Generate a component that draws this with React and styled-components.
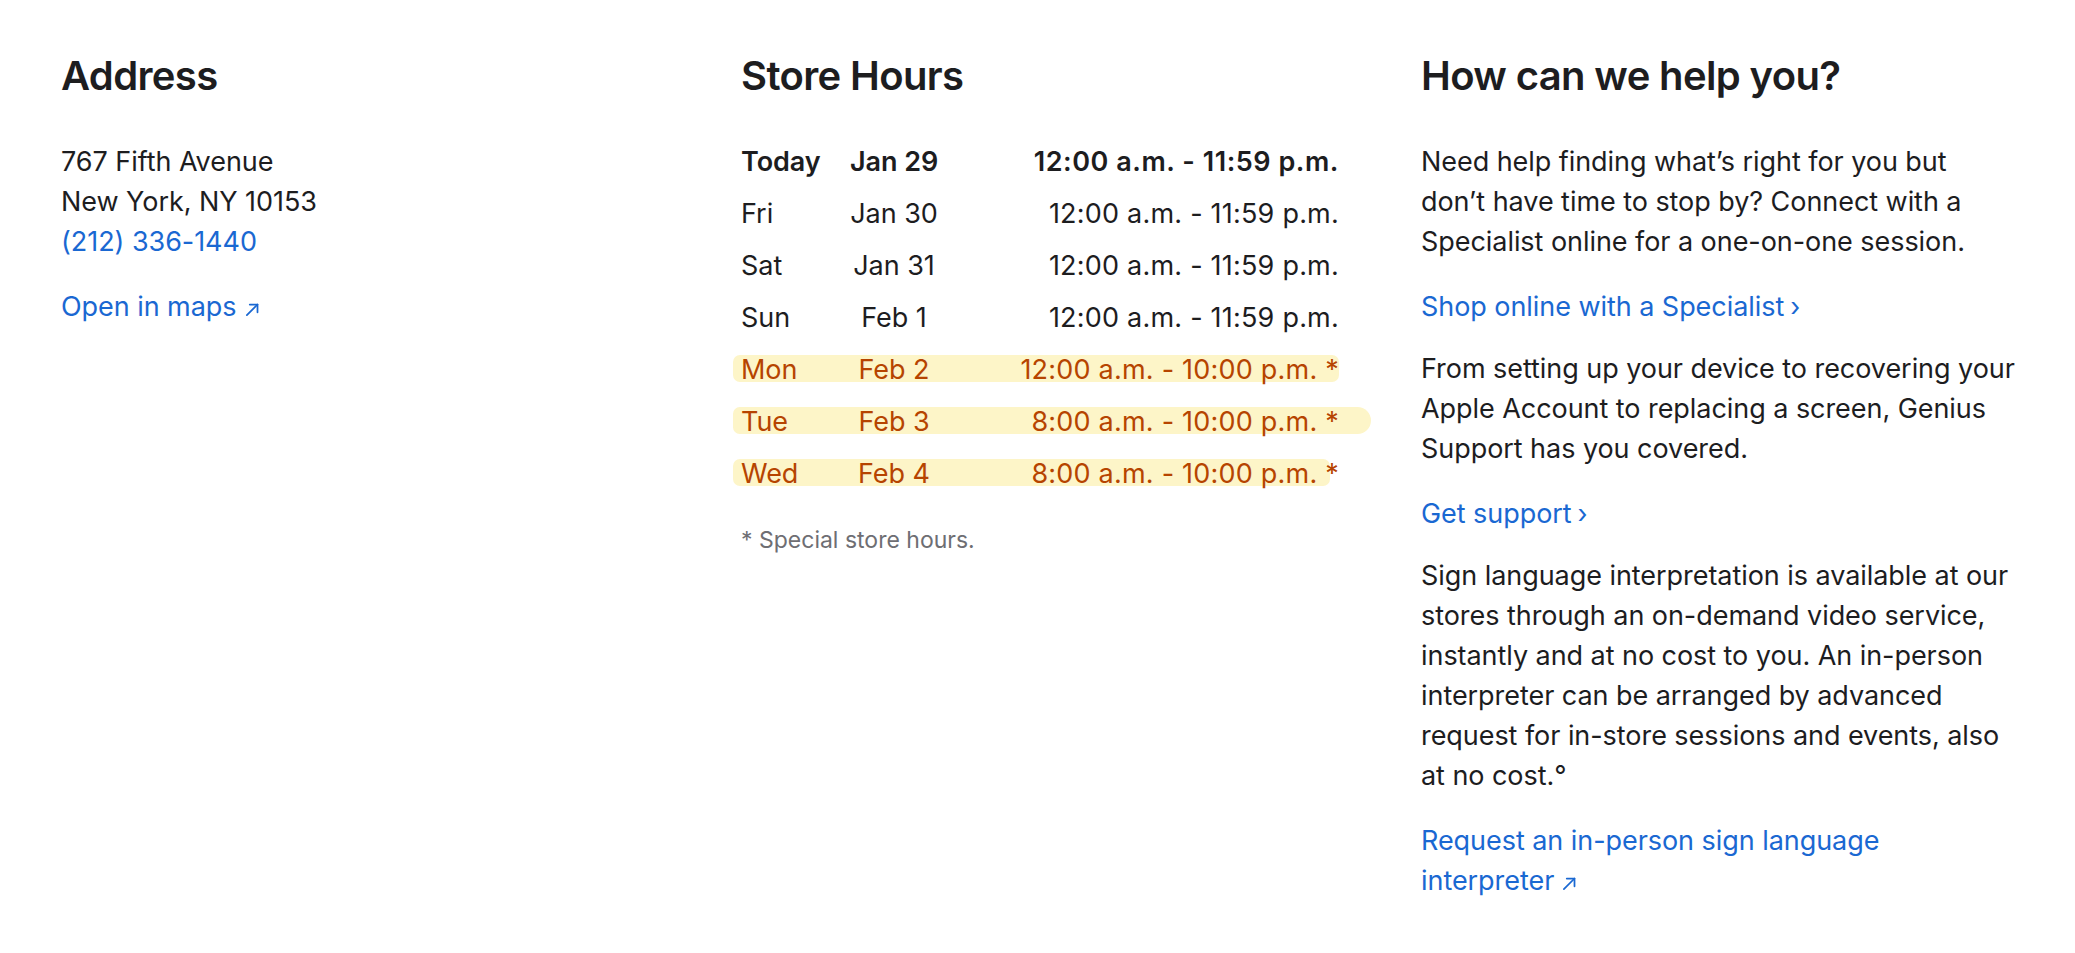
import React from "react";
import styled, { createGlobalStyle } from "styled-components";

const Global = createGlobalStyle`
  html, body { margin: 0; padding: 0; background: #fff; }
  body {
    font-family: Inter, "Noto Sans", "Liberation Sans", sans-serif;
    color: #1d1d1f;
    -webkit-font-smoothing: antialiased;
  }
`;

const Page = styled.main`
  display: grid;
  grid-template-columns: repeat(3, 1fr);
  column-gap: 84px;
  padding: 52px 58px 40px 61px;
  box-sizing: border-box;
  width: 2075px;
`;

const Section = styled.section`
  display: flex;
  flex-direction: column;
  min-width: 0;
`;

const Heading = styled.h2`
  margin: 0 0 42px;
  font-size: 40px;
  line-height: 48px;
  font-weight: 600;
  letter-spacing: -0.016em;
  color: #1d1d1f;
`;

const Para = styled.p`
  margin: ${(p) => p.$top ?? 24}px 0 0;
  font-size: 27px;
  line-height: 40px;
  letter-spacing: -0.002em;
  color: #1d1d1f;
`;

const Link = styled.a`
  color: #1a68d2;
  text-decoration: none;
`;

const NoWrap = styled.span`
  white-space: nowrap;
`;

const Chevron = styled.span`
  display: inline-block;
  margin-left: 6px;
  font-size: 26px;
`;

const Arrow = styled.svg`
  display: inline-block;
  width: 15px;
  height: 15px;
  margin-left: 8px;
  vertical-align: -1px;
`;

const Table = styled.div`
  display: flex;
  flex-direction: column;
  margin-top: -6px;
`;

const Row = styled.div`
  position: relative;
  isolation: isolate;
  display: grid;
  grid-template-columns: 106px 94px 1fr;
  height: 52px;
  align-items: center;
  font-size: 27px;
  line-height: 52px;
  letter-spacing: -0.002em;
  font-weight: ${(p) => (p.$bold ? 600 : 400)};
  color: ${(p) => (p.$special ? "#b64400" : "#1d1d1f")};

  ${(p) =>
    p.$special &&
    `
    &::before {
      content: "";
      position: absolute;
      z-index: -1;
      left: -8px;
      right: ${p.$hlRight}px;
      top: 11px;
      height: 27px;
      border-radius: 7px ${p.$round ? 14 : 7}px ${p.$round ? 14 : 7}px 7px;
      background: #fdf5c8;
    }
  `}
`;

const Day = styled.span`
  text-align: left;
  white-space: nowrap;
`;

const DateCell = styled.span`
  text-align: center;
  white-space: nowrap;
`;

const Time = styled.span`
  text-align: right;
  white-space: nowrap;
  margin-right: -2px;
  letter-spacing: ${(p) => (p.$bold ? "0.02em" : "0.008em")};
`;

const Note = styled.p`
  margin: 24px 0 0;
  font-size: 23px;
  line-height: 32px;
  letter-spacing: 0;
  color: #6e6e73;
`;

const ArrowIcon = () => (
  <Arrow viewBox="0 0 12 12" fill="none" stroke="currentColor" strokeWidth="1.4" strokeLinecap="round" strokeLinejoin="round">
    <path d="M1.5 10.5 L10 2" />
    <path d="M3.8 2 H10 V8.2" />
  </Arrow>
);

const hours = [
  { day: "Today", date: "Jan 29", time: "12:00 a.m. - 11:59 p.m.", bold: true },
  { day: "Fri", date: "Jan 30", time: "12:00 a.m. - 11:59 p.m." },
  { day: "Sat", date: "Jan 31", time: "12:00 a.m. - 11:59 p.m." },
  { day: "Sun", date: "Feb 1", time: "12:00 a.m. - 11:59 p.m." },
  { day: "Mon", date: "Feb 2", time: "12:00 a.m. - 10:00 p.m. *", special: true, hlRight: -2 },
  { day: "Tue", date: "Feb 3", time: "8:00 a.m. - 10:00 p.m. *", special: true, hlRight: -34, round: true },
  { day: "Wed", date: "Feb 4", time: "8:00 a.m. - 10:00 p.m. *", special: true, hlRight: 7 },
];

export default function App() {
  return (
    <>
      <Global />
      <Page>
        <Section>
          <Heading>Address</Heading>
          <Para $top={0}>
            767 Fifth Avenue
            <br />
            New York, NY 10153
            <br />
            <Link href="#">(212) 336-1440</Link>
          </Para>
          <Para $top={25}>
            <Link href="#">
              <NoWrap>
                Open in maps
                <ArrowIcon />
              </NoWrap>
            </Link>
          </Para>
        </Section>

        <Section>
          <Heading>Store Hours</Heading>
          <Table>
            {hours.map((h) => (
              <Row key={h.day} $bold={h.bold} $special={h.special} $hlRight={h.hlRight} $round={h.round}>
                <Day>{h.day}</Day>
                <DateCell>{h.date}</DateCell>
                <Time $bold={h.bold}>{h.time}</Time>
              </Row>
            ))}
          </Table>
          <Note>* Special store hours.</Note>
        </Section>

        <Section>
          <Heading>How can we help you?</Heading>
          <Para $top={0}>
            Need help finding what’s right for you but don’t have time to stop by? Connect with a Specialist online for a one-on-one session.
          </Para>
          <Para $top={25}>
            <Link href="#">
              Shop online with a Specialist<Chevron>›</Chevron>
            </Link>
          </Para>
          <Para $top={22}>
            From setting up your device to recovering your Apple Account to replacing a screen, Genius Support has you covered.
          </Para>
          <Para $top={25}>
            <Link href="#">
              Get support<Chevron>›</Chevron>
            </Link>
          </Para>
          <Para $top={22}>
            Sign language interpretation is available at our stores through an on-demand video service, instantly and at no cost to you. An in-person interpreter can be arranged by advanced request for in-store sessions and events, also at no cost.°
          </Para>
          <Para $top={25}>
            <Link href="#">
              Request an in-person sign language{" "}
              <NoWrap>
                interpreter
                <ArrowIcon />
              </NoWrap>
            </Link>
          </Para>
        </Section>
      </Page>
    </>
  );
}
